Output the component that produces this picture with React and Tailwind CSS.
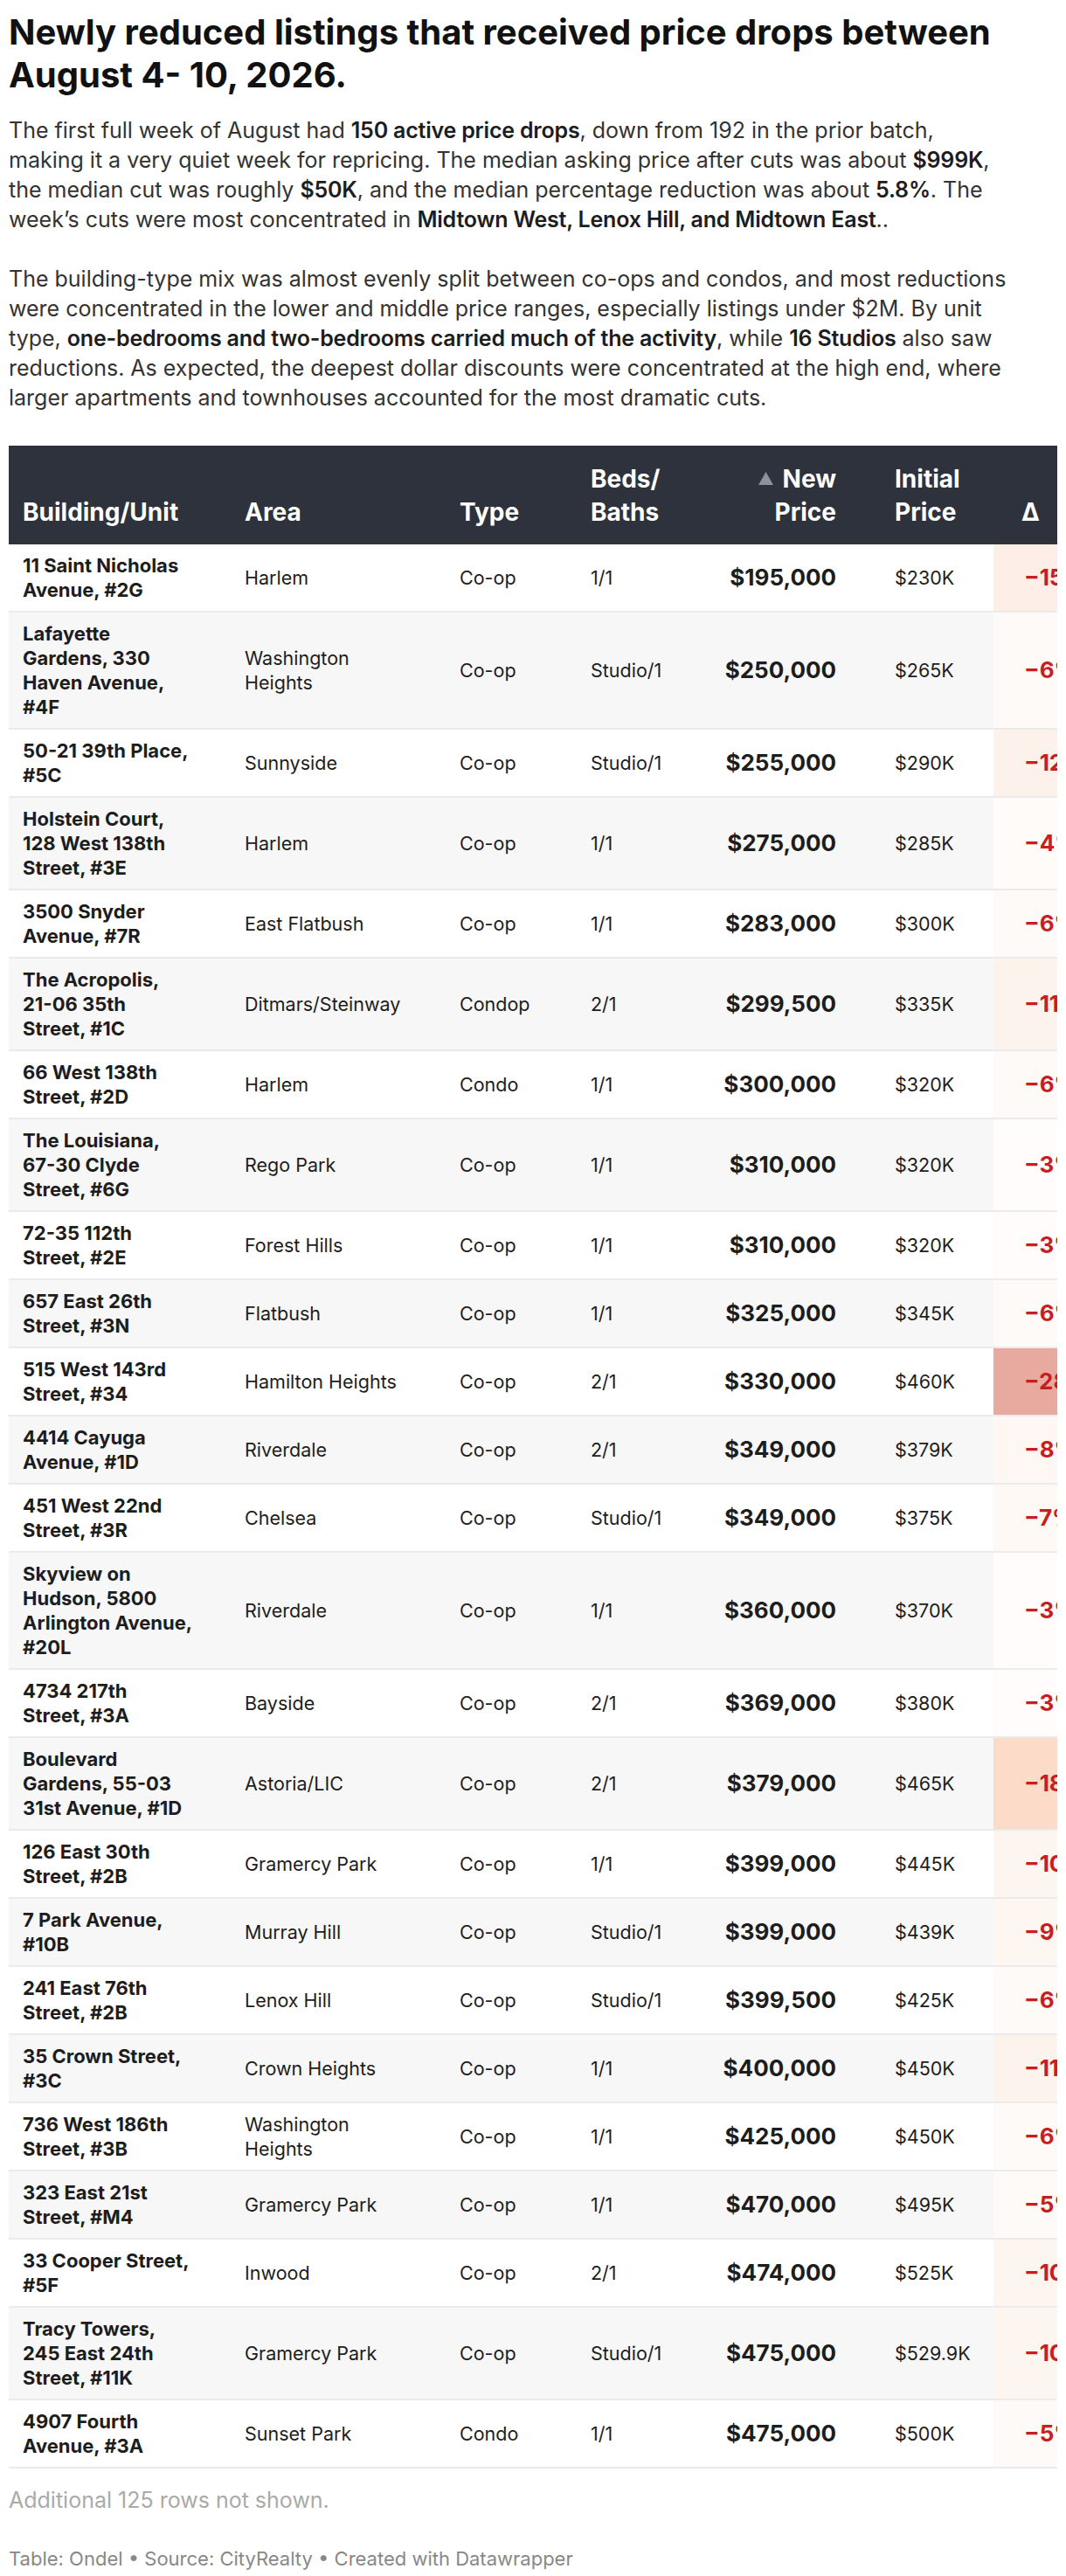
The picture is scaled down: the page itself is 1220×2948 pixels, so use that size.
import React from "react";

const rows = [
  ["11 Saint Nicholas|Avenue, #2G", "Harlem", "Co-op", "1/1", "$195,000", "$230K", "−15%"],
  ["Lafayette|Gardens, 330|Haven Avenue,|#4F", "Washington Heights", "Co-op", "Studio/1", "$250,000", "$265K", "−6%"],
  ["50-21 39th Place,|#5C", "Sunnyside", "Co-op", "Studio/1", "$255,000", "$290K", "−12%"],
  ["Holstein Court,|128 West 138th|Street, #3E", "Harlem", "Co-op", "1/1", "$275,000", "$285K", "−4%"],
  ["3500 Snyder|Avenue, #7R", "East Flatbush", "Co-op", "1/1", "$283,000", "$300K", "−6%"],
  ["The Acropolis,|21-06 35th|Street, #1C", "Ditmars/Steinway", "Condop", "2/1", "$299,500", "$335K", "−11%"],
  ["66 West 138th|Street, #2D", "Harlem", "Condo", "1/1", "$300,000", "$320K", "−6%"],
  ["The Louisiana,|67-30 Clyde|Street, #6G", "Rego Park", "Co-op", "1/1", "$310,000", "$320K", "−3%"],
  ["72-35 112th|Street, #2E", "Forest Hills", "Co-op", "1/1", "$310,000", "$320K", "−3%"],
  ["657 East 26th|Street, #3N", "Flatbush", "Co-op", "1/1", "$325,000", "$345K", "−6%"],
  ["515 West 143rd|Street, #34", "Hamilton Heights", "Co-op", "2/1", "$330,000", "$460K", "−28%"],
  ["4414 Cayuga|Avenue, #1D", "Riverdale", "Co-op", "2/1", "$349,000", "$379K", "−8%"],
  ["451 West 22nd|Street, #3R", "Chelsea", "Co-op", "Studio/1", "$349,000", "$375K", "−7%"],
  ["Skyview on|Hudson, 5800|Arlington Avenue,|#20L", "Riverdale", "Co-op", "1/1", "$360,000", "$370K", "−3%"],
  ["4734 217th|Street, #3A", "Bayside", "Co-op", "2/1", "$369,000", "$380K", "−3%"],
  ["Boulevard|Gardens, 55-03|31st Avenue, #1D", "Astoria/LIC", "Co-op", "2/1", "$379,000", "$465K", "−18%"],
  ["126 East 30th|Street, #2B", "Gramercy Park", "Co-op", "1/1", "$399,000", "$445K", "−10%"],
  ["7 Park Avenue,|#10B", "Murray Hill", "Co-op", "Studio/1", "$399,000", "$439K", "−9%"],
  ["241 East 76th|Street, #2B", "Lenox Hill", "Co-op", "Studio/1", "$399,500", "$425K", "−6%"],
  ["35 Crown Street,|#3C", "Crown Heights", "Co-op", "1/1", "$400,000", "$450K", "−11%"],
  ["736 West 186th|Street, #3B", "Washington Heights", "Co-op", "1/1", "$425,000", "$450K", "−6%"],
  ["323 East 21st|Street, #M4", "Gramercy Park", "Co-op", "1/1", "$470,000", "$495K", "−5%"],
  ["33 Cooper Street,|#5F", "Inwood", "Co-op", "2/1", "$474,000", "$525K", "−10%"],
  ["Tracy Towers,|245 East 24th|Street, #11K", "Gramercy Park", "Co-op", "Studio/1", "$475,000", "$529.9K", "−10%"],
  ["4907 Fourth|Avenue, #3A", "Sunset Park", "Condo", "1/1", "$475,000", "$500K", "−5%"],
];

const dBg = {
  "−3%": "bg-[#fffcfb]",
  "−4%": "bg-[#fefbf9]",
  "−5%": "bg-[#fefaf8]",
  "−6%": "bg-[#fefaf7]",
  "−7%": "bg-[#fef9f5]",
  "−8%": "bg-[#fef7f3]",
  "−9%": "bg-[#fdf6f1]",
  "−10%": "bg-[#fdf5ef]",
  "−11%": "bg-[#fdf3ed]",
  "−12%": "bg-[#fdf2eb]",
  "−15%": "bg-[#fdefe7]",
  "−18%": "bg-[#fcdcc8]",
  "−28%": "bg-[#e8a99f]",
};

function B({ children }) {
  return <b className="font-semibold text-[#1d1d1d] tracking-[-0.2px]">{children}</b>;
}

export default function App() {
  return (
    <div className="w-[1220px] bg-white font-['Inter','Roboto',sans-serif] px-[10px] pt-[12px] pb-[8px]">
      <h1 className="text-[40px] leading-[49px] font-bold text-[#111111]">
        Newly reduced listings that received price drops between August 4- 10, 2026.
      </h1>
      <div className="mt-[22px] text-[25px] leading-[34px] text-[#333333] whitespace-nowrap">
        <p>
          The first full week of August had <B>150 active price drops</B>, down from 192 in the prior batch,
          <br />
          making it a very quiet week for repricing. The median asking price after cuts was about <B>$999K</B>,
          <br />
          the median cut was roughly <B>$50K</B>, and the median percentage reduction was about <B>5.8%</B>. The
          <br />
          week’s cuts were most concentrated in <B>Midtown West, Lenox Hill, and Midtown East</B>..
        </p>
        <p className="mt-[34px]">
          The building-type mix was almost evenly split between co-ops and condos, and most reductions
          <br />
          were concentrated in the lower and middle price ranges, especially listings under $2M. By unit
          <br />
          type, <B>one-bedrooms and two-bedrooms carried much of the activity</B>, while <B>16 Studios</B> also saw
          <br />
          reductions. As expected, the deepest dollar discounts were concentrated at the high end, where
          <br />
          larger apartments and townhouses accounted for the most dramatic cuts.
        </p>
      </div>

      <div className="mt-[38px] w-[1200px] overflow-hidden">
        <table className="table-fixed border-collapse w-[1320px]">
          <colgroup>
            <col className="w-[254px]" />
            <col className="w-[246px]" />
            <col className="w-[150px]" />
            <col className="w-[140px]" />
            <col className="w-[173px]" />
            <col className="w-[164px]" />
            <col className="w-[193px]" />
          </colgroup>
          <thead>
            <tr className="bg-[#2e323c] text-white text-[28px] leading-[38px] font-bold">
              <th className="align-bottom text-left pl-[16px] pt-[16px] pb-[15px] border-b-[3px] border-[#333333] font-bold">Building/Unit</th>
              <th className="align-bottom text-left pl-[16px] pt-[16px] pb-[15px] border-b-[3px] border-[#333333] font-bold">Area</th>
              <th className="align-bottom text-left pl-[16px] pt-[16px] pb-[15px] border-b-[3px] border-[#333333] font-bold">Type</th>
              <th className="align-bottom text-left pl-[16px] pt-[16px] pb-[15px] border-b-[3px] border-[#333333] font-bold">Beds/<br />Baths</th>
              <th className="align-bottom text-right pr-[16px] pt-[16px] pb-[15px] border-b-[3px] border-[#333333] font-bold">
                <span className="inline-flex items-center">
                  <svg width="17" height="15" viewBox="0 0 17 15" className="mr-[11px]">
                    <polygon points="8.5,0 17,15 0,15" fill="#8e9196" />
                  </svg>
                  New
                </span>
                <br />Price
              </th>
              <th className="align-bottom text-left pl-[51px] pt-[16px] pb-[15px] border-b-[3px] border-[#333333] font-bold">Initial<br />Price</th>
              <th className="align-bottom text-left pl-[32px] pt-[16px] pb-[15px] border-b-[3px] border-[#333333] font-bold">Δ</th>
            </tr>
          </thead>
          <tbody>
            {rows.map((r, i) => (
              <tr key={i} className={i % 2 === 1 ? "bg-[#f7f7f7]" : "bg-white"}>
                <td className="align-middle pl-[16px] pr-[8px] py-[10px] border-b-2 border-[#ebebeb] text-[22px] leading-[28px] font-bold text-[#1d1d1d] whitespace-nowrap">
                  {r[0].split("|").map((line, j) => (
                    <div key={j}>{line}</div>
                  ))}
                </td>
                <td className="align-middle pl-[16px] pr-[50px] py-[10px] border-b-2 border-[#ebebeb] text-[21.5px] leading-[28px] text-[#1d1d1d]">{r[1]}</td>
                <td className="align-middle pl-[16px] py-[10px] border-b-2 border-[#ebebeb] text-[21.5px] leading-[28px] text-[#1d1d1d]">{r[2]}</td>
                <td className="align-middle pl-[16px] py-[10px] border-b-2 border-[#ebebeb] text-[21.5px] leading-[28px] text-[#1d1d1d]">{r[3]}</td>
                <td className="align-middle text-right pr-[16px] py-[10px] border-b-2 border-[#ebebeb] text-[26px] leading-[28px] font-bold text-[#1d1d1d]">{r[4]}</td>
                <td className="align-middle pl-[51px] py-[10px] border-b-2 border-[#ebebeb] text-[21.5px] leading-[28px] text-[#1d1d1d]">{r[5]}</td>
                <td className={"align-middle pl-[35px] py-[10px] border-b-2 border-[#ebebeb] text-[26px] leading-[28px] font-bold text-[#c71f1f] " + dBg[r[6]]}>{r[6]}</td>
              </tr>
            ))}
          </tbody>
        </table>
      </div>

      <p className="mt-[20px] text-[25px] leading-[33.5px] text-[#aaaaaa]">Additional 125 rows not shown.</p>
      <p className="mt-[36px] text-[22px] leading-[28px] text-[#888888]">
        Table: Ondel • Source: CityRealty • Created with Datawrapper
      </p>
    </div>
  );
}
